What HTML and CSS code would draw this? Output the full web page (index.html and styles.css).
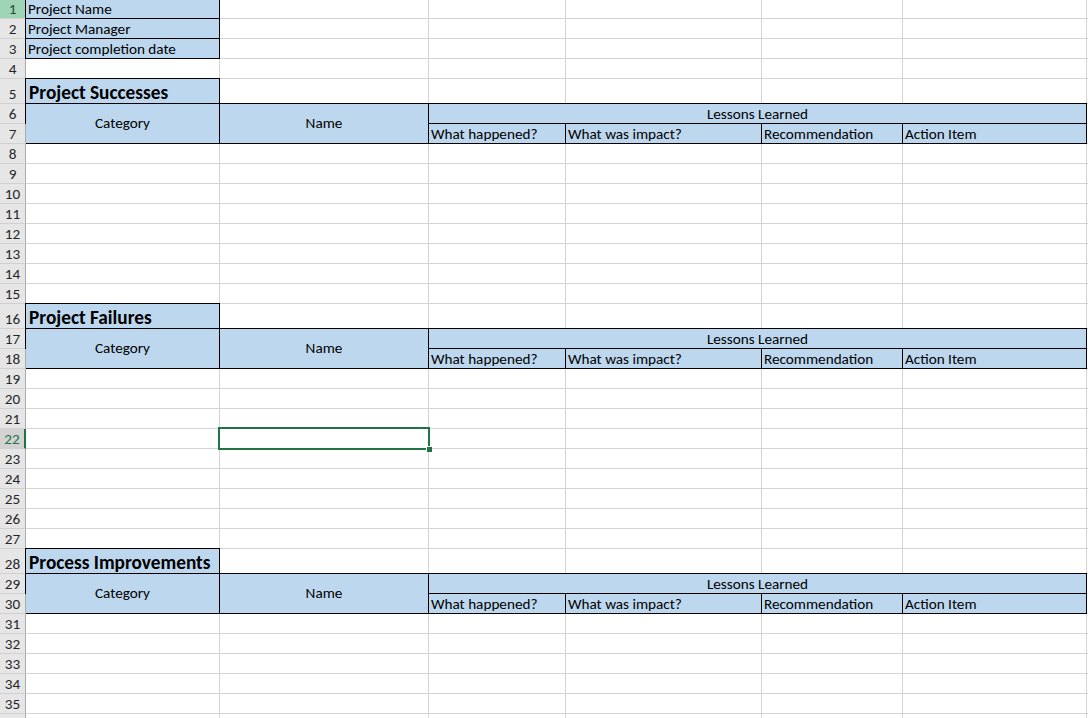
FILE: index.html
```html
<!DOCTYPE html>
<html>
<head>
<meta charset="utf-8">
<link rel="stylesheet" href="styles.css">
</head>
<body>
<div class="sheet">
  <div class="hdr hdr-green">1</div><div class="cell blue bx ca">Project Name</div><div class="blank cb"></div>
  <div class="hdr">2</div><div class="cell blue bx ca">Project Manager</div><div class="blank cb"></div>
  <div class="hdr">3</div><div class="cell blue bx ca">Project completion date</div><div class="blank cb"></div>
  <div class="hdr">4</div><div class="blank ca"></div>
  <div class="hdr">5</div><div class="cell blue bx ca title">Project Successes</div><div class="blank cb"></div>
  <div class="hdr">6</div><div class="cell blue bx ca span2 center">Category</div><div class="cell blue bx cbb span2 center">Name</div><div class="cell blue bx lessons">Lessons Learned</div><div class="blank cg"></div>
  <div class="hdr">7</div><div class="cell blue bx cc">What happened?</div><div class="cell blue bx cd">What was impact?</div><div class="cell blue bx ce">Recommendation</div><div class="cell blue bx cf">Action Item</div><div class="blank cg"></div>
  <div class="hdr">8</div><div class="blank ca"></div>
  <div class="hdr">9</div><div class="blank ca"></div>
  <div class="hdr">10</div><div class="blank ca"></div>
  <div class="hdr">11</div><div class="blank ca"></div>
  <div class="hdr">12</div><div class="blank ca"></div>
  <div class="hdr">13</div><div class="blank ca"></div>
  <div class="hdr">14</div><div class="blank ca"></div>
  <div class="hdr">15</div><div class="blank ca"></div>
  <div class="hdr">16</div><div class="cell blue bx ca title">Project Failures</div><div class="blank cb"></div>
  <div class="hdr">17</div><div class="cell blue bx ca span2 center">Category</div><div class="cell blue bx cbb span2 center">Name</div><div class="cell blue bx lessons">Lessons Learned</div><div class="blank cg"></div>
  <div class="hdr">18</div><div class="cell blue bx cc">What happened?</div><div class="cell blue bx cd">What was impact?</div><div class="cell blue bx ce">Recommendation</div><div class="cell blue bx cf">Action Item</div><div class="blank cg"></div>
  <div class="hdr">19</div><div class="blank ca"></div>
  <div class="hdr">20</div><div class="blank ca"></div>
  <div class="hdr">21</div><div class="blank ca"></div>
  <div class="hdr hdr-sel">22</div><div class="blank ca"></div>
  <div class="hdr">23</div><div class="blank ca"></div>
  <div class="hdr">24</div><div class="blank ca"></div>
  <div class="hdr">25</div><div class="blank ca"></div>
  <div class="hdr">26</div><div class="blank ca"></div>
  <div class="hdr">27</div><div class="blank ca"></div>
  <div class="hdr">28</div><div class="cell blue bx ca title">Process Improvements</div><div class="blank cb"></div>
  <div class="hdr">29</div><div class="cell blue bx ca span2 center">Category</div><div class="cell blue bx cbb span2 center">Name</div><div class="cell blue bx lessons">Lessons Learned</div><div class="blank cg"></div>
  <div class="hdr">30</div><div class="cell blue bx cc">What happened?</div><div class="cell blue bx cd">What was impact?</div><div class="cell blue bx ce">Recommendation</div><div class="cell blue bx cf">Action Item</div><div class="blank cg"></div>
  <div class="hdr">31</div><div class="blank ca"></div>
  <div class="hdr">32</div><div class="blank ca"></div>
  <div class="hdr">33</div><div class="blank ca"></div>
  <div class="hdr">34</div><div class="blank ca"></div>
  <div class="hdr">35</div><div class="blank ca"></div>
  <div class="hdr"></div><div class="blank ca"></div>
  <div class="selection"><span class="handle"></span></div>
</div>
</body>
</html>
```
FILE: styles.css
```css
html, body {
  margin: 0;
  padding: 0;
  background: #fff;
  overflow: hidden;
  width: 1088px;
  height: 718px;
}

.sheet {
  position: relative;
  margin-top: -1px;
  width: 1088px;
  display: grid;
  grid-template-columns: 26px 194px 209px 137px 196px 141px 184px 1fr;
  grid-template-rows:
    repeat(4, 20px) 25px
    repeat(10, 20px) 25px
    repeat(11, 20px) 25px
    repeat(8, 20px);
  font-family: Carlito, Lato, "Liberation Sans", sans-serif;
  font-size: 15.2px;
  color: #000;
  background:
    linear-gradient(#d4d4d4, #d4d4d4) 219px 0 / 1px 100% no-repeat,
    linear-gradient(#d4d4d4, #d4d4d4) 428px 0 / 1px 100% no-repeat,
    linear-gradient(#d4d4d4, #d4d4d4) 565px 0 / 1px 100% no-repeat,
    linear-gradient(#d4d4d4, #d4d4d4) 761px 0 / 1px 100% no-repeat,
    linear-gradient(#d4d4d4, #d4d4d4) 902px 0 / 1px 100% no-repeat,
    linear-gradient(#d4d4d4, #d4d4d4) 1086px 0 / 1px 100% no-repeat,
    #fff;
}

.hdr {
  grid-column: 1;
  box-sizing: border-box;
  background: #e6e6e6;
  border-right: 1px solid #ababab;
  border-bottom: 1px solid #d0d0d0;
  color: #262626;
  display: flex;
  align-items: flex-end;
  justify-content: center;
  padding-bottom: 0;
  line-height: 17px;
}

.hdr-green {
  background: #9fd5b7;
  color: #1f4d33;
}

.hdr-sel {
  background: #d2d2d2;
  color: #217346;
  border-right: 2px solid #217346;
}

.blank {
  box-sizing: border-box;
  border-bottom: 1px solid #d4d4d4;
}

.ca { grid-column: 2; }
.blank.ca { grid-column: 2 / -1; }
.blank.cb { grid-column: 3 / -1; }
.cbb { grid-column: 3; }
.cc { grid-column: 4; }
.cd { grid-column: 5; }
.ce { grid-column: 6; }
.cf { grid-column: 7; }
.cg { grid-column: 8; }
.lessons { grid-column: 4 / 8; justify-content: center; }

.cell {
  box-sizing: border-box;
  display: flex;
  align-items: flex-end;
  padding: 0 2px 0 2px;
  line-height: 17px;
  white-space: nowrap;
  overflow: hidden;
}

.blue { background: #bdd7ee; }

.bx {
  border: 1px solid #000;
  margin-top: -1px;
  margin-left: -1px;
}

.span2 { grid-row: span 2; }

.center {
  align-items: center;
  justify-content: center;
  padding-bottom: 0;
}

.title {
  font-weight: bold;
  font-size: 19.3px;
  line-height: 20px;
  padding-left: 3px;
  padding-bottom: 0;
}

.selection {
  position: absolute;
  left: 218px;
  top: 428px;
  width: 212px;
  height: 23px;
  box-sizing: border-box;
  border: 2px solid #217346;
  pointer-events: none;
}

.handle {
  position: absolute;
  right: -4px;
  bottom: -4px;
  width: 5px;
  height: 5px;
  background: #217346;
  border-left: 1px solid #fff;
  border-top: 1px solid #fff;
}
```
